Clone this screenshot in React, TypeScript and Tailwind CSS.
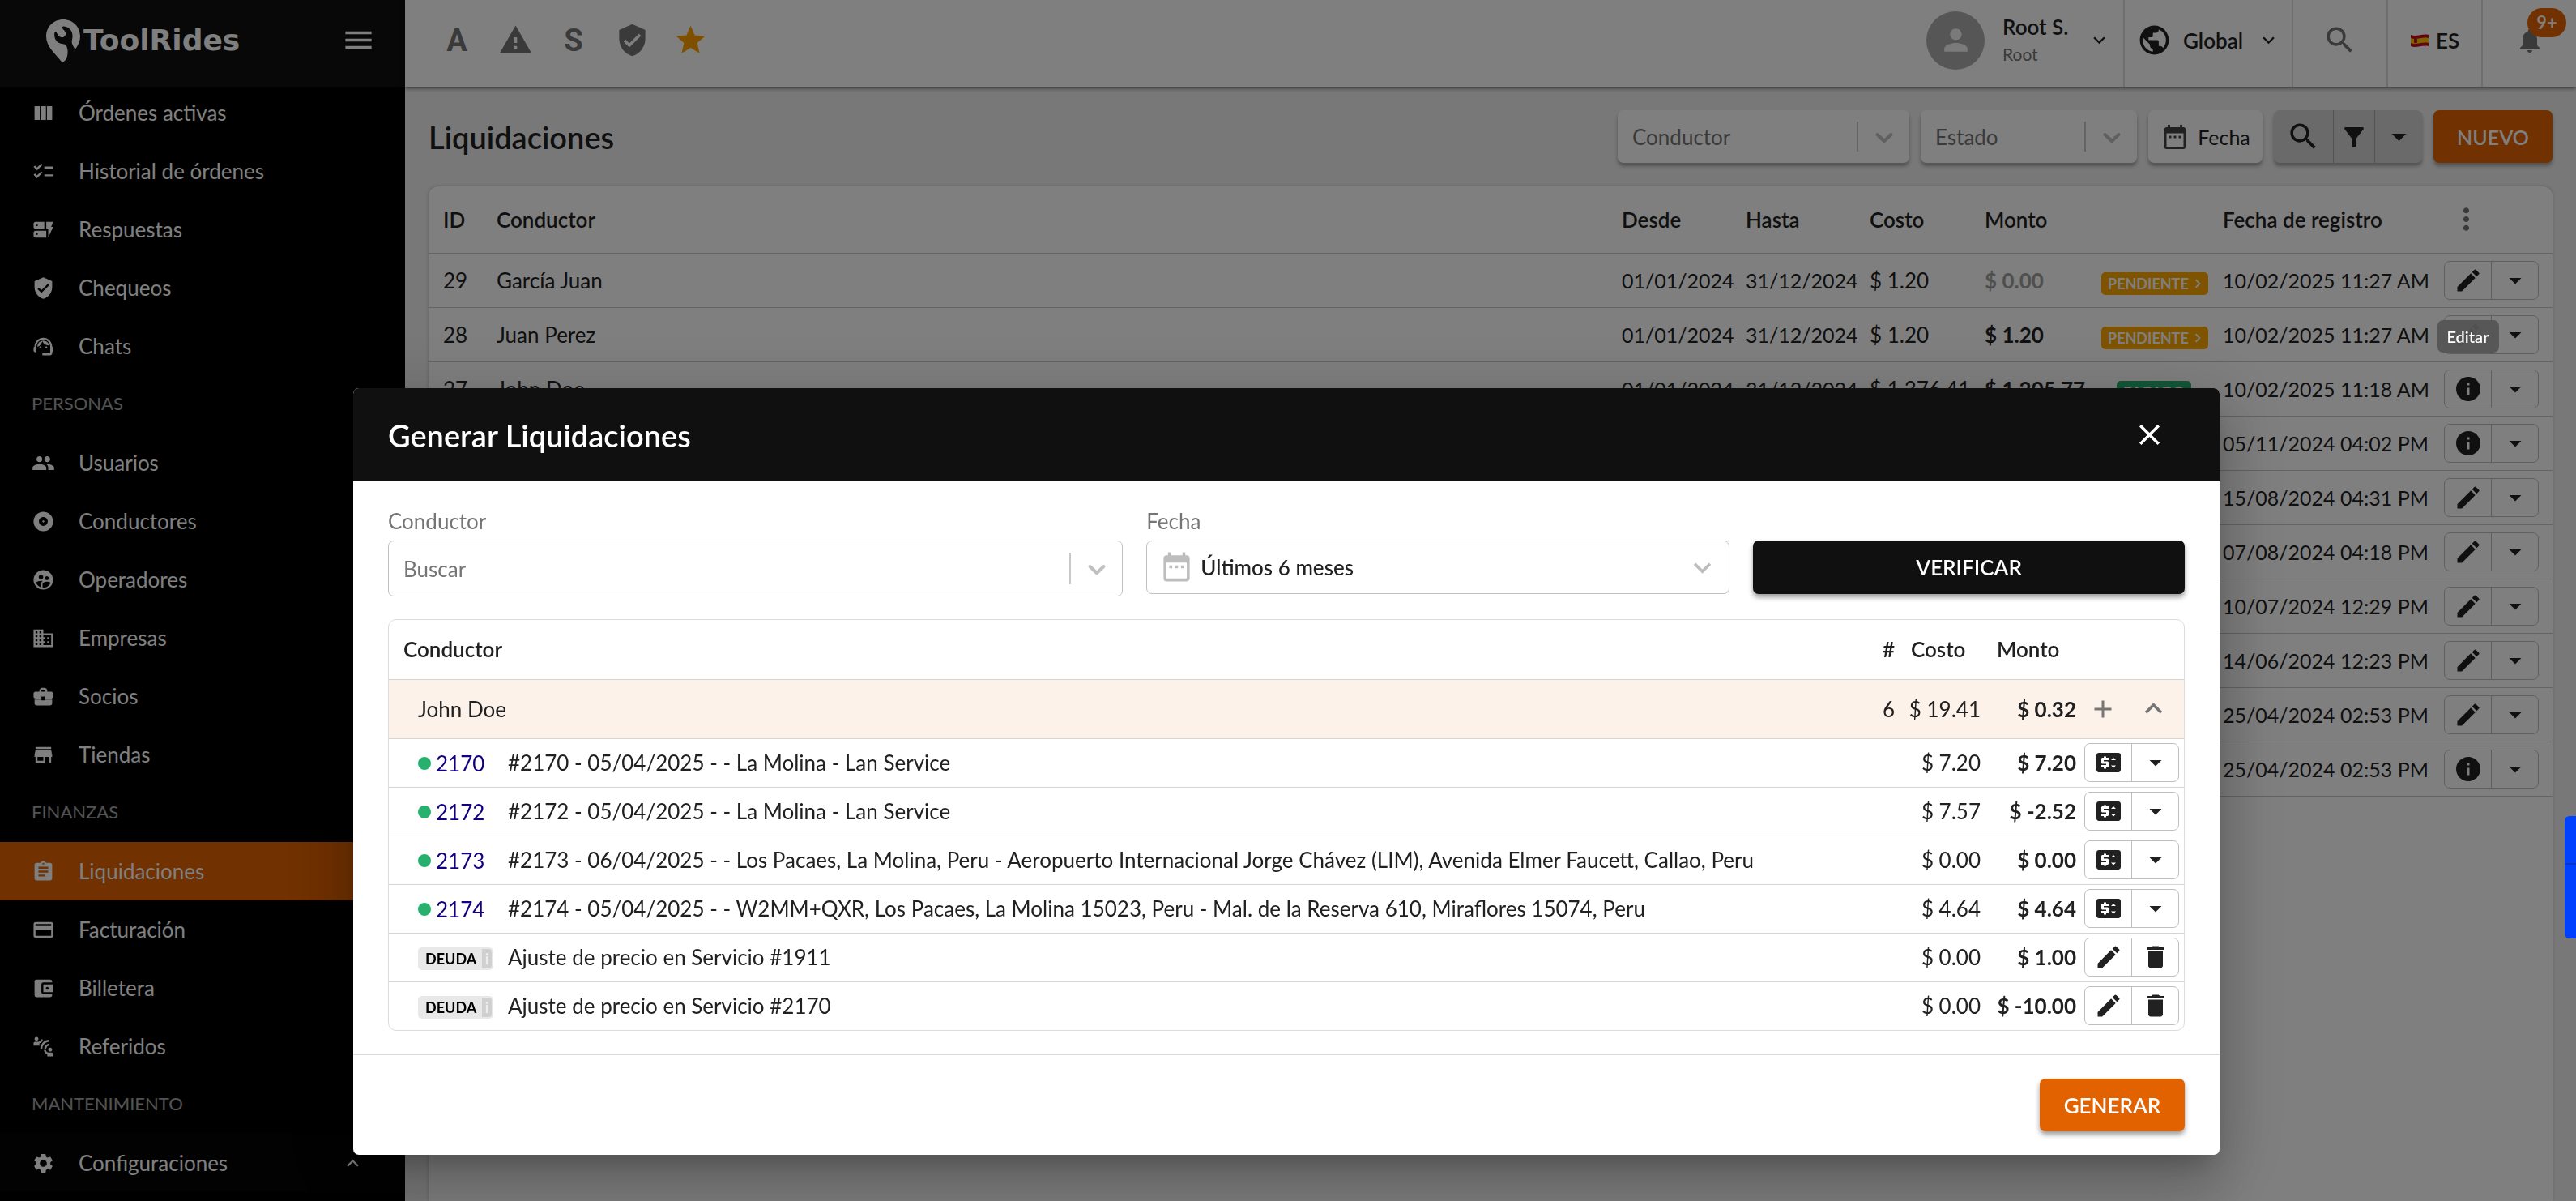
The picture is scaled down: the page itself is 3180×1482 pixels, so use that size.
import { useState } from "react";
import type { ReactNode } from "react";
import type { IconType } from "react-icons";
import {
  MdAccountBalanceWallet,
  MdAdd,
  MdAlbum,
  MdArrowDropDown,
  MdAssignment,
  MdBusinessCenter,
  MdChecklist,
  MdChevronRight,
  MdClose,
  MdConnectWithoutContact,
  MdCreditCard,
  MdDateRange,
  MdDelete,
  MdDomain,
  MdDynamicForm,
  MdEdit,
  MdFilterAlt,
  MdInfo,
  MdKeyboardArrowDown,
  MdKeyboardArrowUp,
  MdMenu,
  MdMoreVert,
  MdNotifications,
  MdPeople,
  MdPerson,
  MdPriceChange,
  MdPublic,
  MdSearch,
  MdSettings,
  MdStar,
  MdStore,
  MdSupervisedUserCircle,
  MdSupportAgent,
  MdVerifiedUser,
  MdViewColumn,
  MdWarning,
} from "react-icons/md";

type NavEntry = { label: string; icon?: IconType; active?: boolean; open?: boolean };

const nav: NavEntry[] = [
  { label: "Órdenes activas", icon: MdViewColumn },
  { label: "Historial de órdenes", icon: MdChecklist },
  { label: "Respuestas", icon: MdDynamicForm },
  { label: "Chequeos", icon: MdVerifiedUser },
  { label: "Chats", icon: MdSupportAgent },
  { label: "PERSONAS" },
  { label: "Usuarios", icon: MdPeople },
  { label: "Conductores", icon: MdAlbum },
  { label: "Operadores", icon: MdSupervisedUserCircle },
  { label: "Empresas", icon: MdDomain },
  { label: "Socios", icon: MdBusinessCenter },
  { label: "Tiendas", icon: MdStore },
  { label: "FINANZAS" },
  { label: "Liquidaciones", icon: MdAssignment, active: true },
  { label: "Facturación", icon: MdCreditCard },
  { label: "Billetera", icon: MdAccountBalanceWallet },
  { label: "Referidos", icon: MdConnectWithoutContact },
  { label: "MANTENIMIENTO" },
  { label: "Configuraciones", icon: MdSettings, open: true },
];

type Settlement = {
  id?: number;
  driver?: string;
  from?: string;
  to?: string;
  cost?: string;
  amount?: string;
  status?: "PENDIENTE" | "PAGADO";
  created: string;
  editable?: boolean;
};

const settlements: Settlement[] = [
  { id: 29, driver: "García Juan", from: "01/01/2024", to: "31/12/2024", cost: "$ 1.20", amount: "$ 0.00", status: "PENDIENTE", created: "10/02/2025 11:27 AM", editable: true },
  { id: 28, driver: "Juan Perez", from: "01/01/2024", to: "31/12/2024", cost: "$ 1.20", amount: "$ 1.20", status: "PENDIENTE", created: "10/02/2025 11:27 AM", editable: true },
  { id: 27, driver: "John Doe", from: "01/01/2024", to: "31/12/2024", cost: "$ 1,376.41", amount: "$ 1,205.77", status: "PAGADO", created: "10/02/2025 11:18 AM" },
  { created: "05/11/2024 04:02 PM" },
  { created: "15/08/2024 04:31 PM", editable: true },
  { created: "07/08/2024 04:18 PM", editable: true },
  { created: "10/07/2024 12:29 PM", editable: true },
  { created: "14/06/2024 12:23 PM", editable: true },
  { created: "25/04/2024 02:53 PM", editable: true },
  { created: "25/04/2024 02:53 PM" },
];

const details = [
  { order: "2170", text: "#2170 - 05/04/2025 - - La Molina - Lan Service", cost: "$ 7.20", amount: "$ 7.20" },
  { order: "2172", text: "#2172 - 05/04/2025 - - La Molina - Lan Service", cost: "$ 7.57", amount: "$ -2.52" },
  { order: "2173", text: "#2173 - 06/04/2025 - - Los Pacaes, La Molina, Peru - Aeropuerto Internacional Jorge Chávez (LIM), Avenida Elmer Faucett, Callao, Peru", cost: "$ 0.00", amount: "$ 0.00" },
  { order: "2174", text: "#2174 - 05/04/2025 - - W2MM+QXR, Los Pacaes, La Molina 15023, Peru - Mal. de la Reserva 610, Miraflores 15074, Peru", cost: "$ 4.64", amount: "$ 4.64" },
  { text: "Ajuste de precio en Servicio #1911", cost: "$ 0.00", amount: "$ 1.00" },
  { text: "Ajuste de precio en Servicio #2170", cost: "$ 0.00", amount: "$ -10.00" },
];

const Logo = () => (
  <div className="flex items-center gap-1 text-white">
    <svg viewBox="0 0 42 52" className="w-[42px] h-[52px]">
      <path d="M21 0C9 0 0 9 0 21c0 12 10 20 18 30 2 2 4 1 5 0C31 42 42 33 42 21 42 9 33 0 21 0Z" fill="#fff" />
      <path
        d="M10.5 15.5C9 22 12 29 19 30c5 0 7 3 7.500 8 .3 5-.5 9-2.500 12L26 52l9.500-15C34 33 30.500 30 32 25c2-8-1-15-10-16.500-2-.2-3 1-2 2.500l3.500 4c2 4-1 8-5 7-3.500-.8-4-3.500-6.500-7Z"
        fill="#101010"
      />
    </svg>
    <span className="font-['DejaVu_Sans'] text-[36px] leading-none font-bold">ToolRides</span>
  </div>
);

const Sidebar = () => (
  <aside className="w-[500px] shrink-0 bg-black text-white overflow-hidden">
    <div className="relative h-[107px] pl-[57px] pr-9 pb-2 flex items-center justify-between bg-[#101010]">
      <Logo />
      <button aria-label="Menú">
        <MdMenu size={43} />
      </button>
    </div>
    <nav className="-mt-1">
      {nav.map(({ label, icon: Icon, active, open }) =>
        Icon ? (
          <a
            key={label}
            href="#"
            className={`h-[72px] pl-[39px] pr-[50px] flex items-center gap-[29px] ${active ? "bg-[#e36200]" : open ? "bg-[#040404]" : ""}`}
          >
            <Icon size={29} />
            <span className="flex-1">{label}</span>
            {open && <MdKeyboardArrowUp size={29} />}
          </a>
        ) : (
          <div key={label} className="h-[72px] pl-[39px] pb-[2px] flex items-center text-[22px] text-white/65">
            {label}
          </div>
        )
      )}
    </nav>
  </aside>
);

const Flag = () => (
  <svg viewBox="0 0 24 18" className="w-6 h-[18px]">
    <path d="M1 2c7 3 14-2 22 0v14c-8-2-15 3-22 0Z" fill="#c60b1e" />
    <path d="M1 6c7 3 14-2 22 0v6c-8-2-15 3-22 0Z" fill="#ffc400" />
    <rect x="5" y="7" width="4" height="5" rx="1" fill="#ad1519" />
  </svg>
);

const TopBar = () => (
  <header className="relative z-10 h-[107px] shrink-0 flex items-stretch bg-white shadow-[0_2px_5px_rgba(0,0,0,0.5)]">
    <div className="flex-1 pl-7 pb-2 flex items-center text-[#757575]">
      <button className="w-[72px] text-[38px] font-bold font-['Roboto']">A</button>
      <button className="w-[72px] flex justify-center" aria-label="Alertas"><MdWarning size={43} /></button>
      <button className="w-[72px] text-[38px] font-bold font-['Roboto']">S</button>
      <button className="w-[72px] flex justify-center" aria-label="Verificados"><MdVerifiedUser size={43} /></button>
      <button className="w-[72px] flex justify-center text-[#ff9f00]" aria-label="Favoritos"><MdStar size={43} /></button>
    </div>
    <button className="w-[243px] pb-2 flex items-center text-left">
      <span className="w-[72px] h-[72px] shrink-0 rounded-full bg-[#adadad] text-[#f5f5f5] flex items-center justify-center">
        <MdPerson size={43} />
      </span>
      <span className="flex-1 pl-[22px] leading-[34px]">
        <span className="block font-semibold">Root S.</span>
        <span className="block text-[21px] text-[#757575]">Root</span>
      </span>
      <MdKeyboardArrowDown size={29} className="mr-[15px]" />
    </button>
    <button className="w-[208px] pb-2 pl-[15px] flex items-center border-l-2 border-[#dcdcdc]">
      <MdPublic size={43} />
      <span className="flex-1 pl-[14px] text-left font-semibold">Global</span>
      <MdKeyboardArrowDown size={29} className="mr-[14px]" />
    </button>
    <button className="w-[117px] pb-2 flex items-center justify-center border-l-2 border-[#dcdcdc] text-[#757575]" aria-label="Buscar">
      <MdSearch size={43} />
    </button>
    <button className="w-[117px] pb-2 flex items-center justify-center gap-2 border-l-2 border-[#dcdcdc] font-semibold">
      <Flag /> ES
    </button>
    <button className="relative w-[117px] pb-2 flex items-center justify-center border-l-2 border-[#dcdcdc] text-[#757575]" aria-label="Notificaciones">
      <MdNotifications size={36} />
      <span className="absolute right-3 top-[10px] h-9 w-12 rounded-full bg-[#e36200] text-white text-[22px] font-semibold flex items-center justify-center">
        9+
      </span>
    </button>
  </header>
);

const SelectArrow = () => (
  <svg viewBox="0 0 20 20" className="w-9 h-9" fill="currentColor">
    <path d="M4.516 7.548c0.436-0.446 1.043-0.481 1.576 0l3.908 3.747 3.908-3.747c0.533-0.481 1.141-0.446 1.574 0 0.436 0.445 0.408 1.197 0 1.615-0.406 0.418-4.695 4.502-4.695 4.502-0.217 0.223-0.502 0.335-0.787 0.335s-0.570-0.112-0.789-0.335c0 0-4.287-4.084-4.695-4.502s-0.436-1.170 0-1.615z" />
  </svg>
);

const Select = ({ label, placeholder, className }: { label: string; placeholder: string; className: string }) => (
  <div className={`relative rounded-[7px] bg-white text-[#c0c0c0] ${className}`}>
    <select id={label} aria-label={placeholder} className="w-full h-full pl-[18px] pr-20 appearance-none bg-transparent text-[#757575]">
      <option>{placeholder}</option>
    </select>
    <span className="absolute inset-y-0 right-0 w-[65px] my-[14px] pl-[14px] border-l-2 border-[#c8c8c8] flex items-center pointer-events-none">
      <SelectArrow />
    </span>
  </div>
);

const raised = "shadow-[0_4px_4px_rgba(0,0,0,0.3)]";

const Toolbar = () => (
  <div className="flex items-center gap-[14px]">
    <h1 className="flex-1 text-[38px] font-semibold">Liquidaciones</h1>
    <Select label="f-conductor" placeholder="Conductor" className="w-[360px] h-[65px] shadow-[0_4px_4px_rgba(0,0,0,0.3)]" />
    <Select label="f-estado" placeholder="Estado" className="w-[267px] h-[65px] shadow-[0_4px_4px_rgba(0,0,0,0.3)]" />
    <button className={`w-[141px] h-[65px] rounded-[7px] bg-white text-[25px] flex items-center justify-center gap-[10px] ${raised}`}>
      <MdDateRange size={36} className="text-[#424242]" />
      Fecha
    </button>
    <div className={`h-[65px] rounded-[7px] bg-[#d5d5d5] flex ${raised}`}>
      <button className="w-[73px] flex items-center justify-center" aria-label="Buscar"><MdSearch size={43} /></button>
      <button className="w-[51px] flex items-center justify-center border-l border-[#a8a8a8]" aria-label="Filtrar"><MdFilterAlt size={36} /></button>
      <button className="w-[59px] flex items-center justify-center border-l border-[#a8a8a8]" aria-label="Más filtros"><MdArrowDropDown size={43} /></button>
    </div>
    <button className={`w-[147px] h-[65px] rounded-[7px] bg-[#e36200] text-white text-[25px] font-semibold ${raised}`}>NUEVO</button>
  </div>
);

const ActionGroup = ({ children, extra }: { children: ReactNode; extra?: ReactNode }) => (
  <div className="flex w-[117px] h-12 rounded-[7px] border border-[#bfbfbf] divide-x divide-[#bfbfbf] [&>button]:flex-1 [&>button]:flex [&>button]:items-center [&>button]:justify-center">
    {children}
    {extra ?? (
      <button aria-label="Más"><MdArrowDropDown size={36} /></button>
    )}
  </div>
);

const SettlementsTable = () => (
  <section className="flex-1 rounded-t-xl bg-white shadow-[0_0_4px_rgba(0,0,0,0.2)]">
    <table className="w-full table-fixed text-left [&_td]:px-[10px] [&_th]:px-[10px] [&_th]:font-semibold whitespace-nowrap">
      <colgroup>
        <col className="w-[74px]" />
        <col />
        <col className="w-[153px]" />
        <col className="w-[153px]" />
        <col className="w-[142px]" />
        <col className="w-[144px]" />
        <col className="w-[150px]" />
        <col className="w-[273px]" />
        <col className="w-[144px]" />
      </colgroup>
      <thead>
        <tr className="h-[82px] border-b border-[#c8c8c8]">
          <th><span className="pl-2">ID</span></th>
          <th>Conductor</th>
          <th>Desde</th>
          <th>Hasta</th>
          <th>Costo</th>
          <th>Monto</th>
          <th></th>
          <th>Fecha de registro</th>
          <th>
            <button className="flex w-[55px] justify-center text-[#757575]" aria-label="Opciones"><MdMoreVert size={43} /></button>
          </th>
        </tr>
      </thead>
      <tbody>
        {settlements.map((s, i) => (
          <tr key={i} className="h-[67px] border-b border-[#c8c8c8]">
            <td><span className="pl-2">{s.id}</span></td>
            <td>{s.driver}</td>
            <td className="text-[25px]">{s.from}</td>
            <td className="text-[25px]">{s.to}</td>
            <td>{s.cost}</td>
            <td className={`font-bold ${s.amount === "$ 0.00" ? "text-[#9e9e9e]" : ""}`}>{s.amount}</td>
            <td className="text-center">
              {s.status && (
                <span
                  className={`inline-flex items-center h-7 pl-2 rounded-[5px] text-white text-[18px] font-bold align-middle mt-1 ${
                    s.status === "PAGADO" ? "bg-[#28b06f] pr-2" : "bg-[#ffa800] pr-[2px]"
                  }`}
                >
                  {s.status}
                  {s.status === "PENDIENTE" && <MdChevronRight size={22} />}
                </span>
              )}
            </td>
            <td className="text-[25px]">{s.created}</td>
            <td>
              <ActionGroup>
                <button className="relative" aria-label={s.editable ? "Editar" : "Ver"}>
                  {s.editable ? <MdEdit size={36} /> : <MdInfo size={36} />}
                  {i === 0 && (
                    <span className="absolute z-50 left-1/2 top-full mt-[26px] -translate-x-1/2 h-10 px-3 rounded-[7px] bg-[#555555]/95 text-white text-[20px] font-semibold flex items-center">
                      Editar
                    </span>
                  )}
                </button>
              </ActionGroup>
            </td>
          </tr>
        ))}
      </tbody>
    </table>
  </section>
);

const ModalForm = () => (
  <div className="grid grid-cols-12 gap-[29px] items-start">
    <div className="col-span-5">
      <label htmlFor="m-conductor" className="block h-[42px] leading-[36px] text-[#757575]">Conductor</label>
      <Select label="m-conductor" placeholder="Buscar" className="h-[69px] border border-[#c0c0c0]" />
    </div>
    <div className="col-span-4">
      <label htmlFor="m-fecha" className="block h-[42px] leading-[36px] text-[#757575]">Fecha</label>
      <div className="relative h-[66px] rounded-[7px] border border-[#c0c0c0] text-[#bdbdbd]">
        <MdDateRange size={43} className="absolute left-[15px] top-[10px]" />
        <select id="m-fecha" className="w-full h-full pl-[66px] pr-16 appearance-none bg-transparent text-[#212121] font-medium">
          <option>Últimos 6 meses</option>
        </select>
        <MdKeyboardArrowDown size={43} className="absolute right-[11px] top-[11px] pointer-events-none" />
      </div>
    </div>
    <button className="col-span-3 mt-[42px] h-[66px] rounded-[7px] bg-[#101010] text-white font-semibold shadow-[0_4px_6px_rgba(0,0,0,0.4)]">
      VERIFICAR
    </button>
  </div>
);

const DetailsTable = () => (
  <div className="mt-[28px] rounded-[10px] border border-[#dcdcdc] overflow-hidden">
    <table className="w-full table-fixed text-left whitespace-nowrap [&_th]:font-semibold">
      <colgroup>
        <col className="w-[137px]" />
        <col />
        <col className="w-[40px]" />
        <col className="w-[106px]" />
        <col className="w-[118px]" />
        <col className="w-[123px]" />
      </colgroup>
      <thead>
        <tr className="h-[73px]">
          <th colSpan={2} className="pl-[18px]">Conductor</th>
          <th className="text-right pr-[10px]">#</th>
          <th className="pl-[10px]">Costo</th>
          <th className="pl-[10px]">Monto</th>
          <th></th>
        </tr>
      </thead>
      <tbody>
        <tr className="h-[73px] bg-[#fdf2e9] border-t border-[#d4d4d4]">
          <td colSpan={2} className="pl-[36px]">John Doe</td>
          <td className="text-right pr-[10px]">6</td>
          <td className="text-right pr-[10px]">$ 19.41</td>
          <td className="text-right pr-[10px] font-bold">$ 0.32</td>
          <td>
            <div className="flex items-center justify-between pl-[5px] pr-4 text-[#757575]">
              <button aria-label="Agregar"><MdAdd size={36} /></button>
              <button aria-label="Contraer"><MdKeyboardArrowUp size={43} /></button>
            </div>
          </td>
        </tr>
        {details.map((d) => (
          <tr key={d.text} className="h-[60px] border-t border-[#d4d4d4]">
            <td className="pl-[36px]">
              {d.order ? (
                <a href="#" className="flex items-center gap-[6px] pt-[2px] text-[#120080]">
                  <span className="w-4 h-4 rounded-full bg-[#28b06f]" />
                  {d.order}
                </a>
              ) : (
                <span className="flex items-center w-[93px] h-7 mt-1 pl-[9px] pr-[2px] rounded-[5px] bg-[#e8e8e8] text-black text-[18px] font-bold justify-between">
                  DEUDA
                  <span className="w-3 h-6 rounded-r-[4px] bg-[#d0d0d0] text-[#ececec] leading-6 text-center">i</span>
                </span>
              )}
            </td>
            <td className="pl-[10px]">{d.text}</td>
            <td></td>
            <td className="text-right pr-[10px]">{d.cost}</td>
            <td className="text-right pr-[10px] font-bold">{d.amount}</td>
            <td>
              <ActionGroup extra={d.order ? undefined : <button aria-label="Eliminar"><MdDelete size={36} /></button>}>
                <button aria-label={d.order ? "Ajustar precio" : "Editar"}>
                  {d.order ? <MdPriceChange size={36} /> : <MdEdit size={36} />}
                </button>
              </ActionGroup>
            </td>
          </tr>
        ))}
      </tbody>
    </table>
  </div>
);

const Modal = ({ onClose }: { onClose: () => void }) => (
  <div className="fixed inset-0 z-40 bg-black/50 pt-[479px] pr-1 flex items-start justify-center">
    <div
      role="dialog"
      aria-label="Generar Liquidaciones"
      className="w-[2304px] rounded-[7px] overflow-hidden bg-white shadow-[0_20px_28px_-12px_rgba(0,0,0,0.2),0_44px_70px_6px_rgba(0,0,0,0.14),0_16px_84px_14px_rgba(0,0,0,0.14)]"
    >
      <div className="h-[115px] px-[43px] bg-[#101010] text-white flex items-center justify-between">
        <h2 className="text-[38px] font-semibold">Generar Liquidaciones</h2>
        <button className="w-[87px] flex justify-center" aria-label="Cerrar" onClick={onClose}><MdClose size={43} /></button>
      </div>
      <div className="px-[43px] pt-[31px] pb-[29px]">
        <ModalForm />
        <DetailsTable />
      </div>
      <div className="px-[43px] py-[29px] flex justify-end border-t border-[#dcdcdc]">
        <button className="w-[179px] h-[65px] rounded-[7px] bg-[#e36200] text-white font-semibold shadow-[0_4px_6px_rgba(0,0,0,0.4)]">
          GENERAR
        </button>
      </div>
    </div>
  </div>
);

const App = () => {
  const [open, setOpen] = useState(true);

  return (
    <div className="h-screen overflow-hidden flex font-['Lato',sans-serif] text-[26px] leading-[36px] text-[#212121]">
      <Sidebar />
      <div className="flex-1 min-w-0 flex flex-col bg-[#f0f0f0]">
        <TopBar />
        <main className="flex-1 px-[29px] pt-[29px] flex flex-col gap-[29px]">
          <Toolbar />
          <SettlementsTable />
        </main>
      </div>

      {open && <Modal onClose={() => setOpen(false)} />}

      {/* Side tab */}
      <div className="fixed z-50 right-0 top-[1007px] w-[14px] h-[151px] pt-[58px] rounded-l-md bg-[#0040ff]">
        <div className="h-[2px] bg-[#0a34c4]" />
      </div>
    </div>
  );
};

export default App;
